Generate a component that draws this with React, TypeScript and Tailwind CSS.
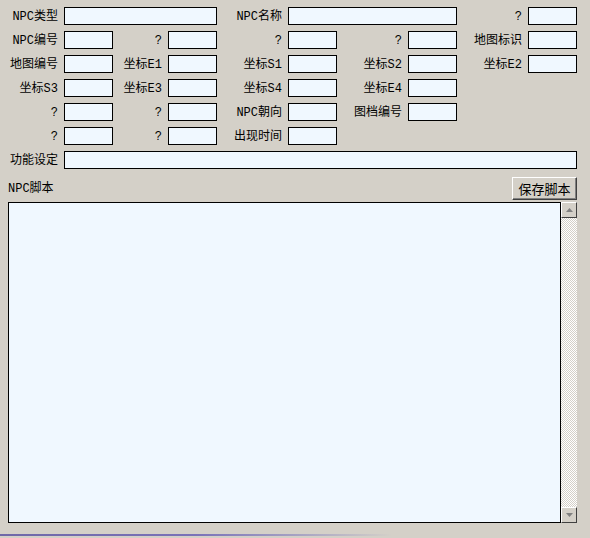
import React from "react";

type Field = { label: string; span?: number };

// each row: label + input pairs, inputs span 1 or 3 grid cells
const rows: Field[][] = [
  [{ label: "NPC类型", span: 3 }, { label: "NPC名称", span: 3 }, { label: "?" }],
  [{ label: "NPC编号" }, { label: "?" }, { label: "?" }, { label: "?" }, { label: "地图标识" }],
  [{ label: "地图编号" }, { label: "坐标E1" }, { label: "坐标S1" }, { label: "坐标S2" }, { label: "坐标E2" }],
  [{ label: "坐标S3" }, { label: "坐标E3" }, { label: "坐标S4" }, { label: "坐标E4" }],
  [{ label: "?" }, { label: "?" }, { label: "NPC朝向" }, { label: "图档编号" }],
  [{ label: "?" }, { label: "?" }, { label: "出现时间" }],
];

const labelFont = { fontFamily: '"Liberation Mono", "Noto Sans CJK SC", monospace' };

const Label = ({ text }: { text: string }) => (
  <div
    className="flex h-[18px] items-center justify-end pt-[2px] pr-[6px] whitespace-nowrap"
    style={labelFont}
  >
    {text}
  </div>
);

const Box = ({ span = 1 }: { span?: number }) => (
  <input
    className={`h-[18px] min-w-0 border border-black bg-[#f0f8ff] outline-none ${
      span === 3 ? "col-span-3" : ""
    }`}
  />
);

const ScrollBtn = ({ up }: { up?: boolean }) => (
  <div className="flex h-[16px] w-[16px] items-center justify-center border border-t-white border-l-white border-r-[#404040] border-b-[#404040] bg-[#d4d0c8]">
    <svg width="7" height="4" viewBox="0 0 7 4">
      {up ? (
        <polygon points="3.5,0 7,4 0,4" fill="#808080" />
      ) : (
        <polygon points="0,0 7,0 3.5,4" fill="#808080" />
      )}
    </svg>
  </div>
);

export default function App() {
  return (
    <div
      className="h-[538px] w-[590px] overflow-hidden bg-[#d4d0c8] text-[12px] leading-none text-black"
      style={{ fontFamily: '"Noto Sans CJK SC", "Liberation Sans", sans-serif' }}
    >
      <div className="pt-[7px]">
        <div className="grid grid-cols-[64px_49px_55px_49px_71px_49px_71px_49px_71px_49px] gap-y-[6px]">
          {rows.map((row, i) => (
            <React.Fragment key={i}>
              {row.map((f, j) => (
                <React.Fragment key={j}>
                  <Label text={f.label} />
                  <Box span={f.span} />
                </React.Fragment>
              ))}
              {Array.from({ length: 10 - row.reduce((n, f) => n + 1 + (f.span ?? 1), 0) }).map((_, k) => (
                <div key={`e${k}`} />
              ))}
            </React.Fragment>
          ))}
          <Label text="功能设定" />
          <input className="col-span-9 h-[18px] border border-black bg-[#f0f8ff] outline-none" />
        </div>
      </div>

      {/* script editor */}
      <div className="mt-[8px] flex items-end justify-between pl-[8px] pr-[13px]">
        <span className="mb-[5px]" style={labelFont}>NPC脚本</span>
        <button className="h-[23px] w-[65px] border border-t-white border-l-white border-r-[#404040] border-b-[#404040] bg-[#d4d0c8] text-[13px] shadow-[inset_-1px_-1px_0_#808080]">
          保存脚本
        </button>
      </div>
      <div className="mt-[2px] ml-[8px] flex h-[321px] w-[569px]">
        <textarea className="h-full flex-1 resize-none border border-black bg-[#f0f8ff] outline-none" />
        <div className="flex w-[16px] flex-col justify-between bg-[repeating-conic-gradient(#d4d0c8_0_25%,#ffffff_0_50%)] bg-[length:2px_2px]">
          <ScrollBtn up />
          <ScrollBtn />
        </div>
      </div>

      {/* progress line */}
      <div className="mt-[11px] h-[2px] w-[392px] bg-gradient-to-r from-[#6f68a8] via-[#7a72b8] to-[#d4d0c8]" />
    </div>
  );
}
